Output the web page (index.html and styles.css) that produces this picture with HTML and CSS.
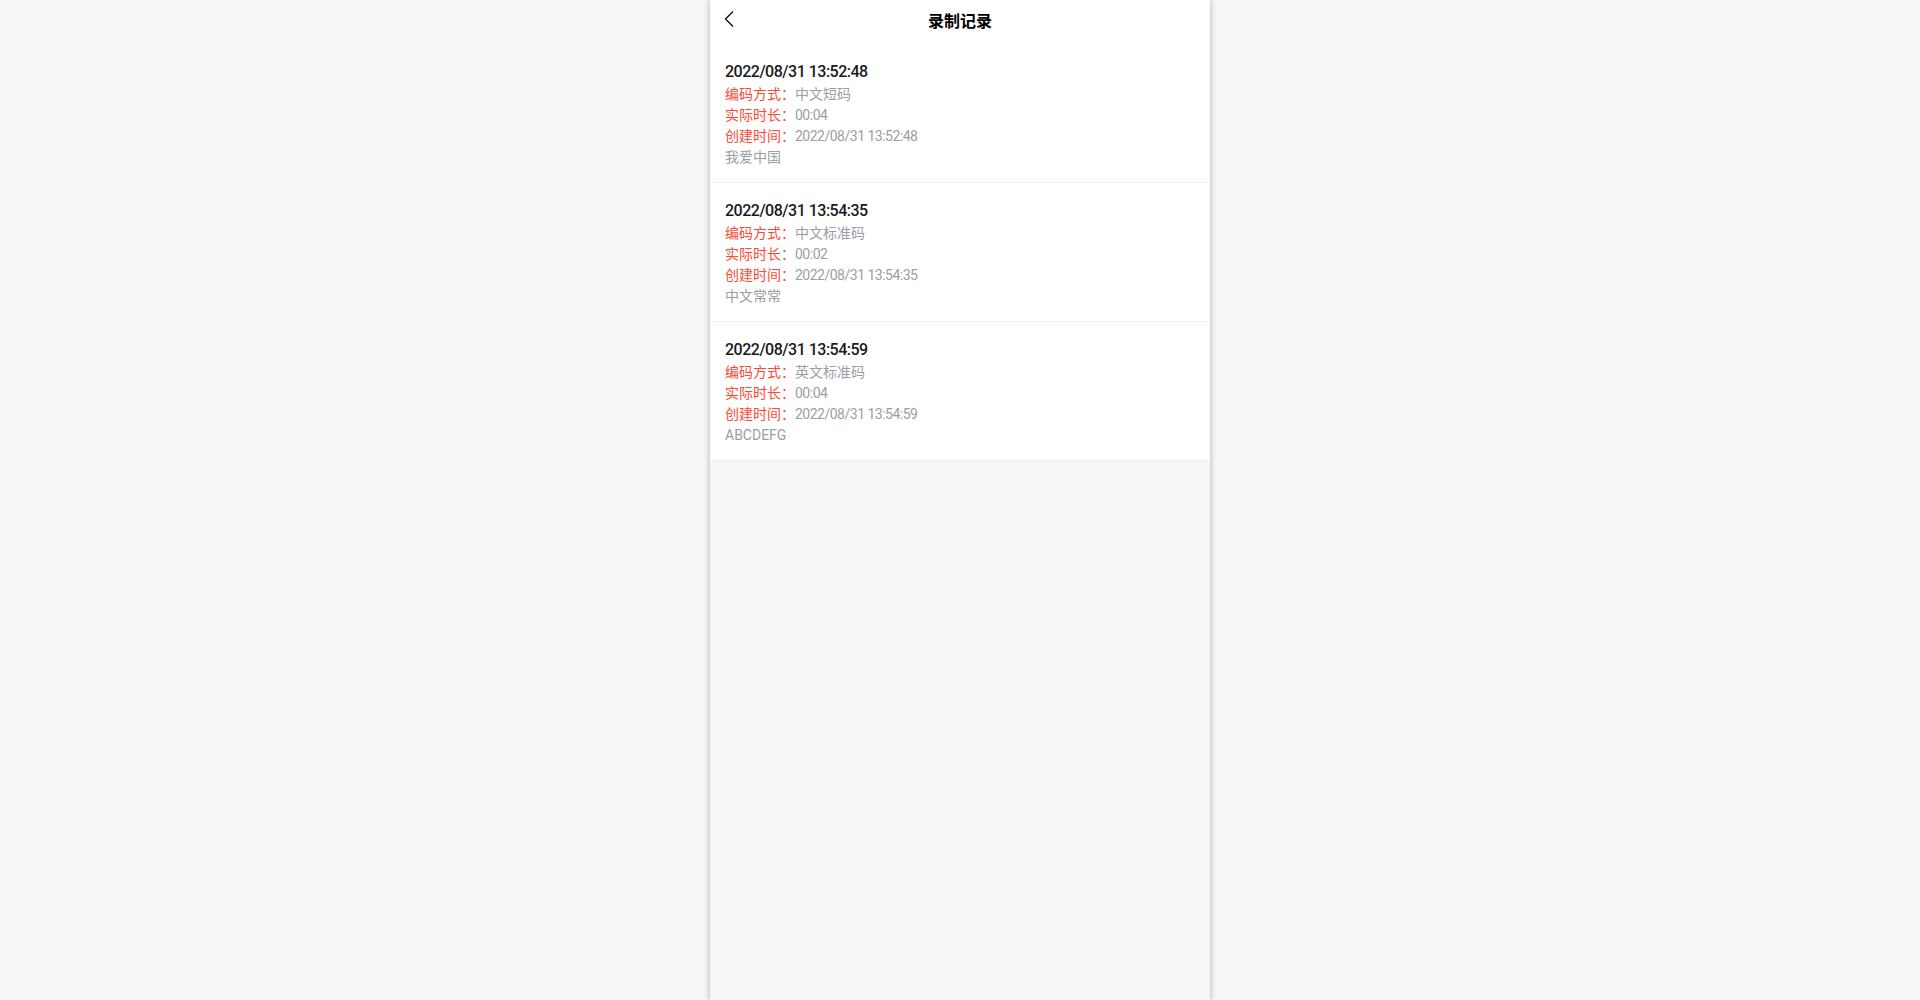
FILE: index.html
```html
<!DOCTYPE html>
<html lang="zh-CN">
  <head>
    <meta charset="UTF-8" />
    <meta name="viewport" content="width=device-width, initial-scale=1.0" />
    <title>录制记录</title>

    <link rel="stylesheet" href="styles.css">
  </head>

  <body>
    <div class="phone">
      <div class="header">
        <div class="back">
          <svg width="12" height="18" viewBox="0 0 12 18">
            <path d="M10 1.5 L2.5 9 L10 16.5" fill="none" stroke="#111" stroke-width="1.4" />
          </svg>
        </div>
        <h1>录制记录</h1>
        <div></div>
      </div>

      <div class="list">
        <div class="record">
          <div class="time">2022/08/31 13:52:48</div>
          <div class="row"><span class="label">编码方式：</span><span class="value">中文短码</span></div>
          <div class="row"><span class="label">实际时长：</span><span class="value num">00:04</span></div>
          <div class="row"><span class="label">创建时间：</span><span class="value num">2022/08/31 13:52:48</span></div>
          <div class="content">我爱中国</div>
        </div>

        <div class="record">
          <div class="time">2022/08/31 13:54:35</div>
          <div class="row"><span class="label">编码方式：</span><span class="value">中文标准码</span></div>
          <div class="row"><span class="label">实际时长：</span><span class="value num">00:02</span></div>
          <div class="row"><span class="label">创建时间：</span><span class="value num">2022/08/31 13:54:35</span></div>
          <div class="content">中文常常</div>
        </div>

        <div class="record">
          <div class="time">2022/08/31 13:54:59</div>
          <div class="row"><span class="label">编码方式：</span><span class="value">英文标准码</span></div>
          <div class="row"><span class="label">实际时长：</span><span class="value num">00:04</span></div>
          <div class="row"><span class="label">创建时间：</span><span class="value num">2022/08/31 13:54:59</span></div>
          <div class="content">ABCDEFG</div>
        </div>
      </div>
    </div>
  </body>
</html>
```

FILE: styles.css
```css
body {
  margin: 0;
  background-color: #f6f6f6;
  font-family: Roboto, "Noto Sans CJK SC", sans-serif;
  color: #1a1a1a;
}

.phone {
  width: 500px;
  min-height: 100vh;
  margin: 0 auto;
  background-color: #f6f6f6;
  box-shadow: 0 0 6px rgba(0, 0, 0, 0.3);
}

.header {
  display: grid;
  grid-template-columns: 40px 1fr 40px;
  align-items: center;
  height: 44px;
  background-color: #fff;
}

.back {
  display: flex;
  align-items: center;
  padding-left: 13px;
  padding-bottom: 6px;
}

.header h1 {
  margin: 0;
  text-align: center;
  font-size: 16px;
  font-weight: bold;
  color: #000;
  line-height: 44px;
}

.record {
  background-color: #fff;
  padding: 16px 15px 14px;
  border-bottom: 1px solid #eef1f3;
}

.time {
  font-size: 16px;
  font-weight: 500;
  line-height: 24px;
  letter-spacing: -0.5px;
  color: #1a1a1a;
}

.row,
.content {
  font-size: 14px;
  line-height: 21px;
}

.label {
  color: #fa4b37;
}

.value {
  color: #999ea7;
}

.num {
  letter-spacing: -0.5px;
}

.content {
  color: #999ea7;
}
```
